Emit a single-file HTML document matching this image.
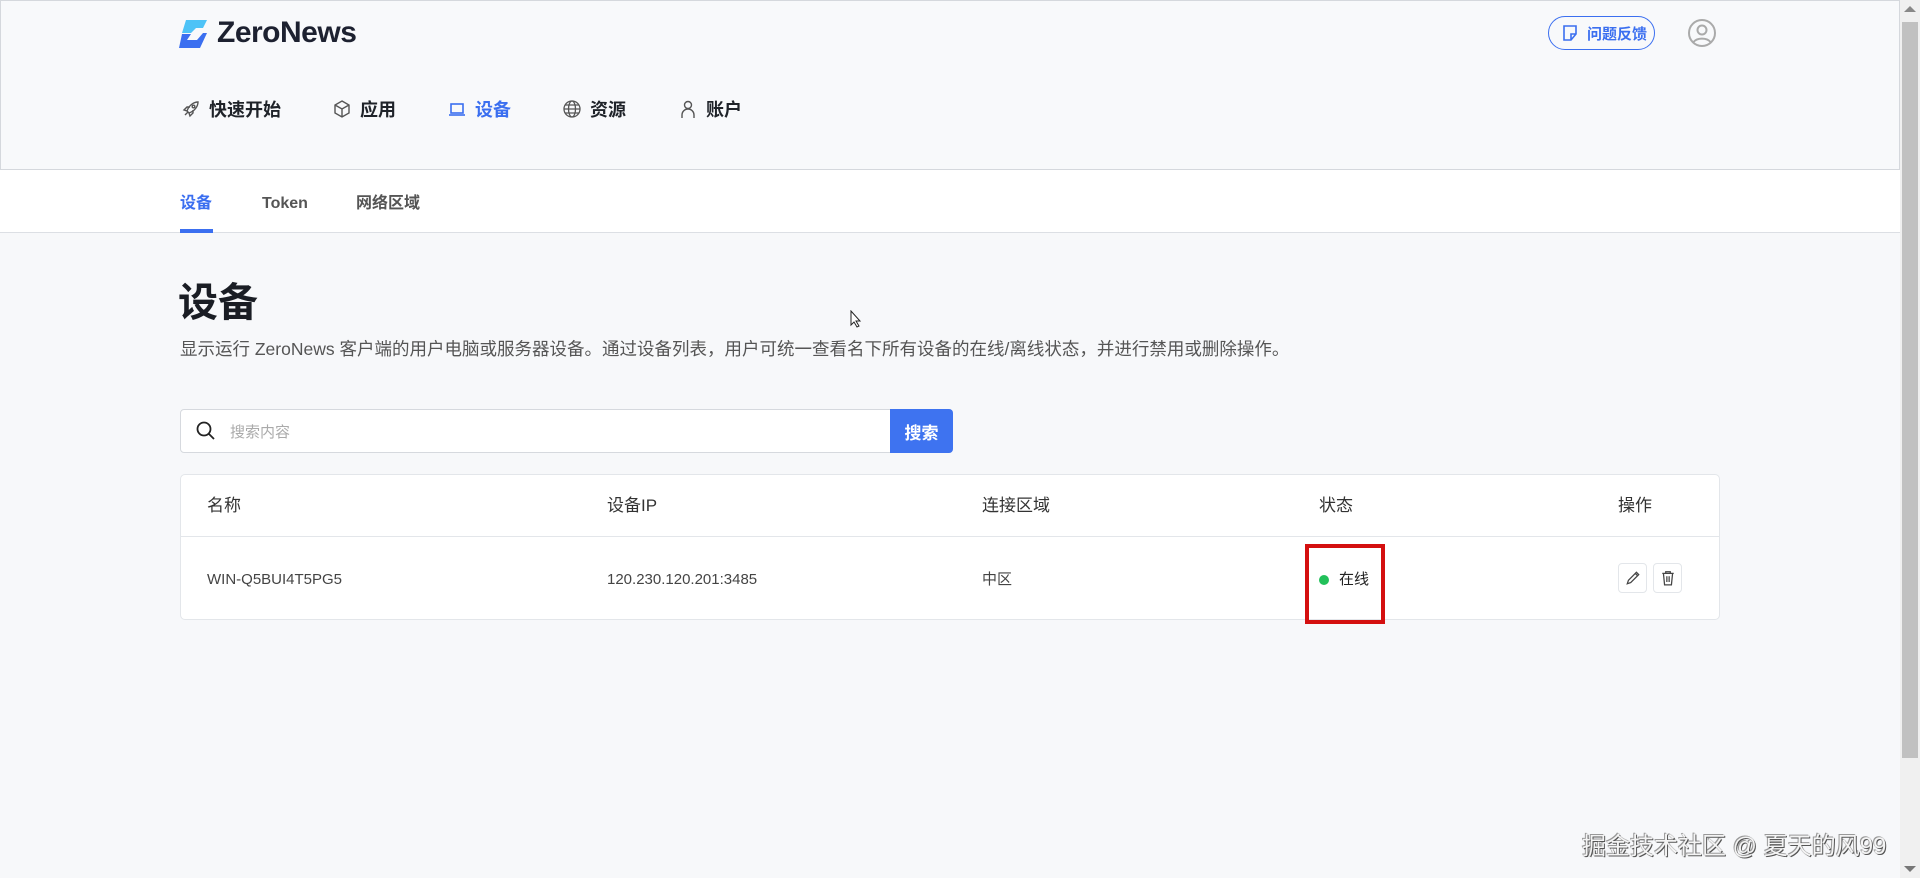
<!DOCTYPE html>
<html><head><meta charset="utf-8"><style>
*{box-sizing:border-box;margin:0;padding:0}
body{width:1920px;height:878px;background:#f7f8fa;font-family:"Liberation Sans","Noto Sans CJK SC",sans-serif;position:relative;overflow:hidden;color:#1f2329}
.abs{position:absolute}
#hdr{left:0;top:0;width:1900px;height:170px;background:#f8f9fb;border:1px solid #d5d8dd}
#sb{left:1900px;top:0;width:20px;height:878px;background:#f0f0f0}
#sbt{left:1902px;top:22px;width:16px;height:736px;background:#c1c1c1}
.nav{top:97px;font-size:18px;font-weight:bold;display:flex;align-items:center;gap:8px;height:24px}
.nav svg{width:20px;height:20px}
#tabs{left:0;top:170px;width:1900px;height:63px;background:#fff;border-bottom:1px solid #dcdfe4}
.tab{top:192px;font-size:16px;font-weight:bold;color:#555;line-height:24px;height:24px;display:flex;align-items:center}
#table{left:180px;top:474px;width:1540px;height:146px;background:#fff;border:1px solid #e3e6ea;border-radius:5px}
.th{top:494px;font-size:17px;color:#333;line-height:24px;height:24px;display:flex;align-items:center}
.td{top:568px;font-size:15px;color:#444;line-height:24px;height:24px;display:flex;align-items:center}
.btn{top:563px;width:29px;height:30px;border:1px solid #e3e6ea;border-radius:4px;background:#fff;display:flex;align-items:center;justify-content:center}
</style></head><body>
<div id="hdr" class="abs"></div>
<div id="sb" class="abs"></div><div id="sbt" class="abs"></div>
<div class="abs" style="left:1904px;top:6px;width:0;height:0;border-left:6px solid transparent;border-right:6px solid transparent;border-bottom:6px solid #888"></div>
<div class="abs" style="left:1904px;top:866px;width:0;height:0;border-left:6px solid transparent;border-right:6px solid transparent;border-top:6px solid #777"></div>
<svg class="abs" style="left:179px;top:20px" width="30" height="28" viewBox="0 0 30 28"><path d="M7 0h21l-4 8H17l-5 5H3z" fill="#4ec3f7"/><path d="M3 14h9l-4 6h10l6-7h4L21 28H0z" fill="#3b6ff0"/></svg>
<div class="abs" style="left:217px;top:16px;font-size:30px;font-weight:bold;color:#1d2130;letter-spacing:-0.5px">ZeroNews</div>
<div class="abs nav" style="left:181px"><svg viewBox="0 0 20 20" fill="none" stroke="#555" stroke-width="1.4"><path d="M4 16l3-3M8 14c6-2 9-7 9-11-4 0-9 3-11 9zM6 12l-3-1 3-3h3M8 14l1 3 3-3v-3"/><circle cx="12.5" cy="7.5" r="1.3"/></svg><span>快速开始</span></div>
<div class="abs nav" style="left:332px"><svg viewBox="0 0 20 20" fill="none" stroke="#555" stroke-width="1.4"><path d="M10 2l7 4v8l-7 4-7-4V6zM3 6l7 4 7-4M10 10v8"/></svg><span>应用</span></div>
<div class="abs nav" style="left:447px;color:#3b6ff0"><svg viewBox="0 0 20 20" fill="none" stroke="#3b6ff0" stroke-width="1.6"><rect x="4" y="5" width="12" height="9"/><path d="M2 16h16"/></svg><span>设备</span></div>
<div class="abs nav" style="left:562px"><svg viewBox="0 0 20 20" fill="none" stroke="#555" stroke-width="1.3"><circle cx="10" cy="10" r="8"/><ellipse cx="10" cy="10" rx="3.5" ry="8"/><path d="M2 10h16M3.5 6h13M3.5 14h13"/></svg><span>资源</span></div>
<div class="abs nav" style="left:678px"><svg viewBox="0 0 20 20" fill="none" stroke="#555" stroke-width="1.4"><circle cx="10" cy="6" r="3.5"/><path d="M4 19v-3a6 6 0 0 1 12 0v3"/></svg><span>账户</span></div>
<div class="abs" style="left:1548px;top:16px;width:107px;height:34px;border:1.5px solid #3b6ff0;border-radius:17px;display:flex;align-items:center;padding-left:12px;gap:8px;color:#3b6ff0;font-size:15px;font-weight:bold"><svg width="18" height="18" viewBox="0 0 18 18" fill="none" stroke="#3b6ff0" stroke-width="1.6"><path d="M3 2h12v8l-5 6H3zM10 16v-6h5"/></svg>问题反馈</div>
<svg class="abs" style="left:1687px;top:18px" width="30" height="30" viewBox="0 0 30 30" fill="none" stroke="#aaa" stroke-width="2"><circle cx="15" cy="15" r="13"/><circle cx="15" cy="12" r="4.5"/><path d="M6.5 24a10 7 0 0 1 17 0"/></svg>
<div id="tabs" class="abs"></div>
<div class="abs tab" style="left:180px;color:#3b6ff0">设备</div>
<div class="abs tab" style="left:262px">Token</div>
<div class="abs tab" style="left:356px">网络区域</div>
<div class="abs" style="left:180px;top:229px;width:33px;height:4px;background:#3b6ff0"></div>
<div class="abs" style="left:178px;top:270px;font-size:40px;font-weight:bold;color:#1a1d24">设备</div>
<div class="abs" style="left:180px;top:336px;font-size:17.5px;color:#555;white-space:nowrap">显示运行 ZeroNews 客户端的用户电脑或服务器设备。通过设备列表，用户可统一查看名下所有设备的在线/离线状态，并进行禁用或删除操作。</div>
<svg class="abs" style="left:850px;top:310px" width="12" height="18" viewBox="0 0 12 18"><path d="M1 1v14l3-3 3 5 2-1-3-5h4z" fill="#fff" stroke="#222"/></svg>
<div class="abs" style="left:180px;top:409px;width:773px;height:44px;background:#fff;border:1px solid #d6d9de;border-radius:4px"></div>
<svg class="abs" style="left:195px;top:420px" width="22" height="22" viewBox="0 0 22 22" fill="none" stroke="#222" stroke-width="1.8"><circle cx="9" cy="9" r="6.5"/><path d="M14 14l5 5"/></svg>
<div class="abs" style="left:230px;top:421px;font-size:15px;color:#aaa">搜索内容</div>
<div class="abs" style="left:890px;top:409px;width:63px;height:44px;background:#3e73f0;border-radius:0 4px 4px 0;color:#fff;font-size:17px;font-weight:bold;display:flex;align-items:center;justify-content:center">搜索</div>
<div id="table" class="abs"></div>
<div class="abs" style="left:181px;top:536px;width:1538px;height:1px;background:#e3e6ea"></div>
<div class="abs th" style="left:207px">名称</div>
<div class="abs th" style="left:607px">设备IP</div>
<div class="abs th" style="left:982px">连接区域</div>
<div class="abs th" style="left:1319px">状态</div>
<div class="abs th" style="left:1618px">操作</div>
<div class="abs td" style="left:207px">WIN-Q5BUI4T5PG5</div>
<div class="abs td" style="left:607px">120.230.120.201:3485</div>
<div class="abs td" style="left:982px">中区</div>
<div class="abs" style="left:1319px;top:575px;width:10px;height:10px;border-radius:50%;background:#22c05a"></div>
<div class="abs td" style="left:1339px;color:#222">在线</div>
<div class="abs" style="left:1305px;top:544px;width:80px;height:80px;border:4px solid #d40f0f"></div>
<div class="abs btn" style="left:1618px"><svg width="16" height="16" viewBox="0 0 14 14" fill="none" stroke="#444" stroke-width="1.1"><path d="M2 12l1-3 7-7 2 2-7 7zM9 3l2 2"/></svg></div>
<div class="abs btn" style="left:1653px"><svg width="16" height="16" viewBox="0 0 14 14" fill="none" stroke="#444" stroke-width="1.1"><path d="M2 3h10M5 3V1.5h4V3M3 3l1 10h6l1-10M6 5.5v5M8 5.5v5"/></svg></div>
<div class="abs" style="left:1582px;top:826px;font-size:24px;color:#f4f4f4;text-shadow:1px 1px 0 #555,-1px -1px 0 #999,0 0 1px #666">掘金技术社区 @ 夏天的风99</div>
</body></html>
